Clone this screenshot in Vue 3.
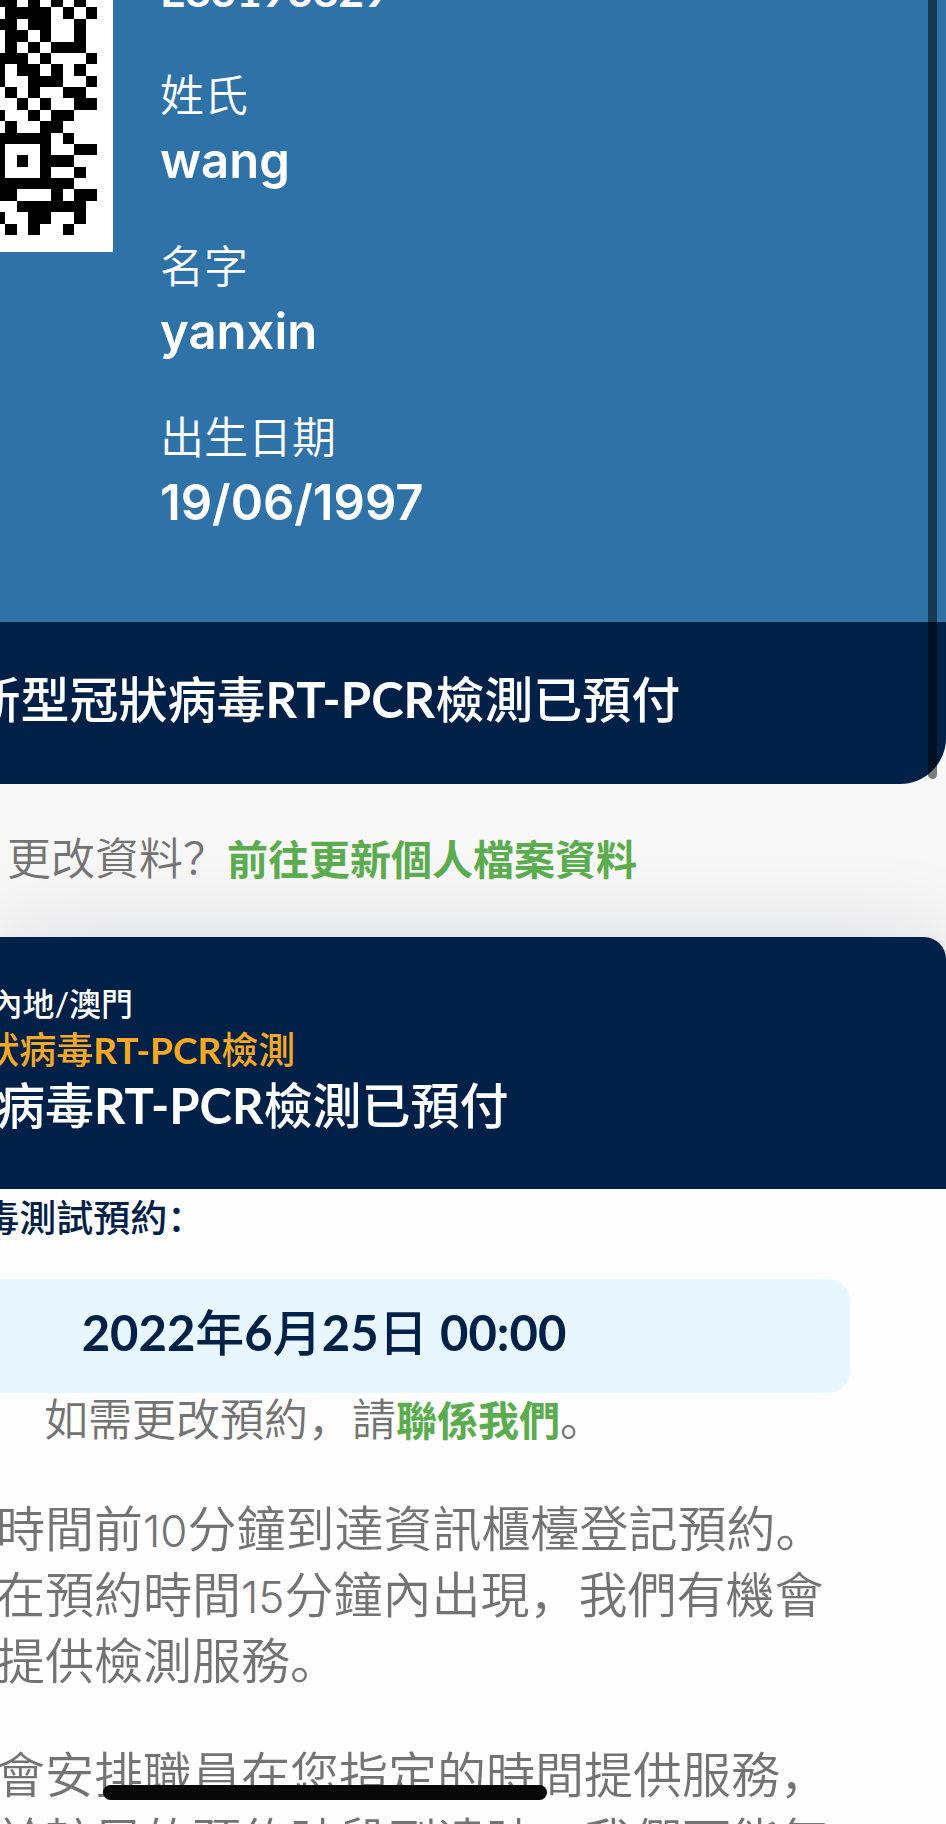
<script setup>
const qrRows = [
  '110101010',
  '011110101',
  '110110010',
  '011010010',
  '010101110',
  '111010001',
  '101101010',
  '100111001',
  '010100110',
  '001010011',
  '100101100',
  '010011000',
  '111110100',
  '100010011',
  '101011100',
  '100010010',
  '111111100',
  '110001011',
  '001111110',
  '100110010',
  '010100100',
]

const qrPath = qrRows
  .map((row, y) => [...row].map((cell, x) => (cell === '1' ? `M${x} ${y}h1v1h-1z` : '')).join(''))
  .join('')

const fields = [
  { label: '姓氏', value: 'wang' },
  { label: '名字', value: 'yanxin' },
  { label: '出生日期', value: '19/06/1997' },
]
</script>

<template>
  <main class="screen">
    <section class="profile">
      <div class="identity">
        <div class="qr">
          <svg viewBox="0 0 9 21" preserveAspectRatio="none" shape-rendering="crispEdges" role="img" aria-label="QR">
            <path :d="qrPath" />
          </svg>
        </div>
        <dl class="fields">
          <div class="field">
            <dd class="document">E83193829</dd>
          </div>
          <div v-for="field in fields" :key="field.label" class="field">
            <dt>{{ field.label }}</dt>
            <dd>{{ field.value }}</dd>
          </div>
        </dl>
      </div>
      <h1 class="title status"><span class="cut-wide">新型冠狀病毒<b>RT-PCR</b>檢測已預付</span></h1>
    </section>

    <p class="note update">更改資料？<a href="#profile">前往更新個人檔案資料</a></p>

    <section class="booking">
      <header class="booking-head">
        <p class="region"><span class="cut-small">內地/澳門</span></p>
        <p class="test"><span class="cut">狀病毒<b>RT-PCR</b>檢測</span></p>
        <h2 class="title edge">病毒<b>RT-PCR</b>檢測已預付</h2>
      </header>
      <h3 class="appointment"><span class="cut">毒測試預約：</span></h3>
      <div class="slot">
        <p class="title time"><b>2022</b>年<b>6</b>月<b>25</b>日 <b>00:00</b></p>
        <p class="note">如需更改預約，請<a href="#contact">聯係我們</a>。</p>
      </div>
      <div class="info edge">
        <p>時間前<span class="num">10</span>分鐘到達資訊櫃檯登記預約。<br />在預約時間<span class="num">15</span>分鐘內出現，我們有機會<br />提供檢測服務。</p>
        <p>會安排職員在您指定的時間提供服務，<br />於較早的預約時段到達時，我們可能無</p>
      </div>
    </section>

    <div class="scrollbar"></div>
    <div class="home-bar"></div>
  </main>
</template>

<style>
html,
body {
  margin: 0;
  height: 100%;
  overflow: hidden;
}
#app {
  height: 100%;
}
</style>

<style scoped>
.screen {
  position: relative;
  height: 100%;
  overflow: hidden;
  background: #f8f8f8;
  color: #737373;
  font-family: Lato, "Noto Sans CJK SC", sans-serif;
  font-weight: 350;
  white-space: nowrap;
}
p,
h1,
h2,
h3,
dl,
dd {
  margin: 0;
}
a {
  color: #5aac4e;
  font-size: 41px;
  font-weight: 700;
  line-height: 1;
  text-decoration: none;
}
b {
  font-weight: 700;
  line-height: 1;
}
.profile {
  border-radius: 0 0 46px 0;
  overflow: hidden;
  background: #002147;
  color: #fff;
}
.identity {
  display: flex;
  align-items: flex-start;
  gap: 47px;
  height: 622px;
  background: #2f72a8;
}
.qr {
  flex: none;
  display: flex;
  justify-content: flex-end;
  margin: -4px 0 0 -6px;
  padding: 0 16px 17px 0;
  background: #fff;
}
.qr svg {
  width: 103px;
  height: 239px;
}
.fields {
  margin-top: -44px;
}
.field {
  margin-bottom: 40px;
}
dt {
  font-size: 44px;
  line-height: 64px;
}
dd {
  padding-top: 1px;
  font-family: Inter, sans-serif;
  font-size: 49px;
  font-weight: 600;
  line-height: 66px;
}
.document {
  font-family: Lato, sans-serif;
  font-size: 44px;
  font-weight: 700;
}
.title {
  font-size: 49px;
  font-weight: 500;
  line-height: 66px;
}
.status {
  padding: 44px 0 52px;
}
.cut {
  margin-left: -0.48em;
}
.cut-wide {
  margin-left: -0.58em;
}
.cut-small {
  margin-left: -0.3em;
}
.edge {
  margin-left: -4px;
}
.note {
  font-size: 44px;
  line-height: 60px;
}
.update {
  padding: 44px 7px 49px;
}
.booking {
  border-radius: 0 22px 0 0;
  background: #fefefe;
  box-shadow: 0 0 90px rgba(0, 20, 50, 0.14);
}
.booking-head {
  padding: 45px 0 52px;
  border-radius: 0 22px 0 0;
  background: #002147;
  color: #fff;
}
.region {
  font-size: 32px;
  font-weight: 500;
  line-height: 44px;
}
.test {
  color: #f5a823;
  font-size: 37px;
  font-weight: 500;
  line-height: 48px;
}
.booking-head .title {
  line-height: 63px;
}
.appointment {
  padding-top: 4px;
  color: #002147;
  font-size: 37px;
  font-weight: 500;
  line-height: 50px;
}
.slot {
  margin: 36px 96px 0 -202px;
  text-align: center;
}
.time {
  padding: 20px 24px 28px;
  border-radius: 22px;
  background: #e7f6ff;
  color: #002147;
}
.slot .note {
  margin-top: -4px;
}
.info {
  margin-top: -2px;
  font-size: 49px;
  line-height: 66px;
}
.info p {
  padding-top: 48px;
}
.num {
  font-family: Inter, sans-serif;
  font-size: 44px;
  font-weight: 300;
  line-height: 1;
}
.scrollbar {
  position: absolute;
  top: 0;
  right: 9px;
  width: 9px;
  height: 779px;
  border-radius: 0 0 5px 5px;
  background: rgba(0, 0, 0, 0.5);
}
.home-bar {
  position: absolute;
  bottom: 24px;
  left: 103px;
  width: 444px;
  height: 15px;
  border-radius: 8px;
  background: #080808;
}
</style>
